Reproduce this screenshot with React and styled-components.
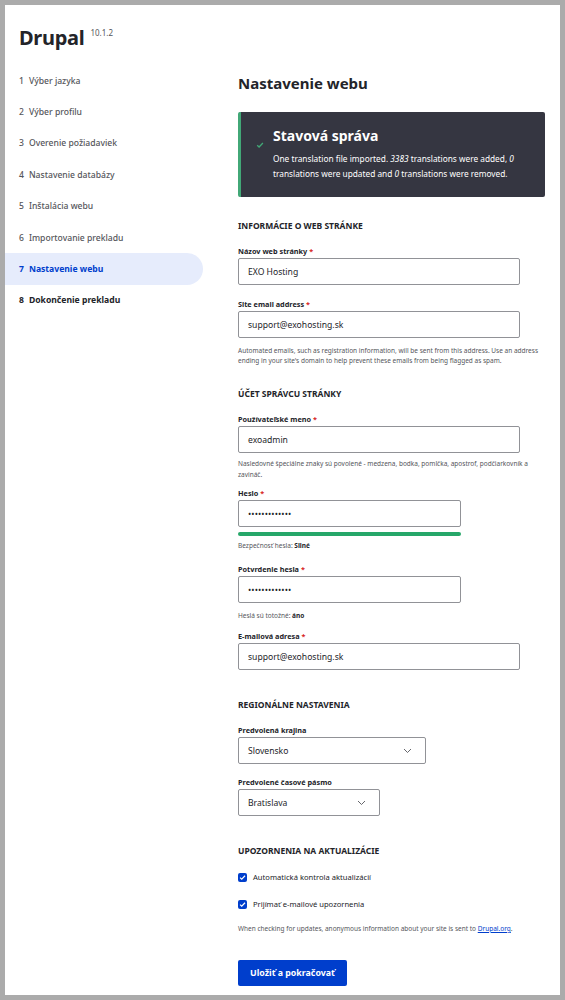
import React from 'react';
import styled, { createGlobalStyle } from 'styled-components';

const Global = createGlobalStyle`
  html, body { margin: 0; padding: 0; background: #ababab; }
  * { box-sizing: border-box; }
  body { font-family: "Noto Sans", "Open Sans", sans-serif; color: #232429; }
`

const Frame = styled.div`
  width: 565px;
  height: 1000px;
  border: 5px solid #ababab;
  background: #fff;
  overflow: hidden;
`

const Header = styled.header`
  height: 60px;
  padding: 20px 0 0 14px;
  display: flex;
  align-items: flex-start;
  gap: 6px;
`

const Brand = styled.h1`
  margin: 0;
  font-size: 20px;
  line-height: 26px;
  font-weight: 700;
  letter-spacing: -0.3px;
`

const Version = styled.span`
  font-size: 8px;
  line-height: 12px;
  color: #55565b;
  margin-top: 2px;
`

const Layout = styled.div`
  display: grid;
  grid-template-columns: 198px 307px;
  column-gap: 35px;
`

const Steps = styled.ol`
  list-style: none;
  margin: 0;
  padding: 0;
`

const Step = styled.li`
  height: 31.4px;
  display: flex;
  align-items: center;
  gap: 5px;
  padding-left: 14px;
  font-size: 8.6px;
  color: ${({ $active, $done }) => ($active ? '#003ecc' : $done ? '#55565b' : '#232429')};
  font-weight: ${({ $done }) => ($done ? 500 : 700)};
  background: ${({ $active }) => ($active ? '#e6ecfc' : 'transparent')};
  border-radius: 0 16px 16px 0;
`

const Main = styled.main`
  padding-top: 8px;
`

const PageTitle = styled.h2`
  margin: 0 0 19px;
  font-size: 15px;
  line-height: 20px;
  font-weight: 700;
`

const Message = styled.div`
  height: 85px;
  background: #353641;
  border-left: 3px solid #42a877;
  border-radius: 2px;
  padding: 14px 6px 0 15px;
  display: grid;
  grid-template-columns: 17px 1fr;
  color: #fff;
`

const MessageTitle = styled.div`
  font-size: 14px;
  line-height: 20px;
  font-weight: 700;
  margin-bottom: 5px;
`

const MessageText = styled.div`
  font-size: 8.3px;
  line-height: 15px;
  em { font-style: italic; }
`

const SectionTitle = styled.h3`
  margin: ${({ $top }) => $top}px 0 0;
  font-size: 8.5px;
  line-height: 14px;
  font-weight: 700;
  text-transform: uppercase;
`

const Field = styled.div`
  margin-top: ${({ $top }) => $top}px;
`

const Label = styled.label`
  display: block;
  font-size: 7.3px;
  line-height: 12px;
  font-weight: 700;
  margin-bottom: 1px;
`

const Req = styled.span`
  color: #d72222;
  margin-left: 2px;
`

const Input = styled.div`
  width: ${({ $w }) => $w}px;
  height: 27px;
  border: 1px solid #919297;
  border-radius: 2px;
  padding: 0 9px;
  display: flex;
  align-items: center;
  font-size: 8.6px;
  color: #232429;
  letter-spacing: ${({ $dots }) => ($dots ? '0.1px' : '0')};
`

const SelectBox = styled(Input)`
  justify-content: space-between;
  padding-right: 13px;
`

const Help = styled.div`
  margin-top: ${({ $top }) => $top}px;
  font-size: 6.5px;
  line-height: ${({ $lh }) => $lh || 10}px;
  color: #55565b;
  b { color: #232429; font-weight: 700; }
  a { color: #003ecc; }
`

const Strength = styled.div`
  width: 223px;
  height: 4px;
  margin-top: 5px;
  border-radius: 2px;
  background: #26a769;
`

const CheckRow = styled.div`
  margin-top: ${({ $top }) => $top}px;
  height: 14px;
  display: flex;
  align-items: center;
  gap: 6px;
  font-size: 7.6px;
  color: #232429;
`

const Box = styled.span`
  width: 9px;
  height: 9px;
  border-radius: 2px;
  background: #003ecc;
  display: flex;
  align-items: center;
  justify-content: center;
`

const Button = styled.button`
  margin-top: 26px;
  height: 26px;
  padding: 0 12px;
  border: 0;
  border-radius: 2px;
  background: #003ecc;
  color: #fff;
  font-family: inherit;
  font-size: 8.8px;
  font-weight: 700;
`

const Chevron = () => (
  <svg width="9" height="6" viewBox="0 0 9 6" fill="none">
    <path d="M1 1l3.5 3.5L8 1" stroke="#55565b" strokeWidth="0.9" />
  </svg>
)

const Tick = ({ size = 7, color = '#fff' }) => (
  <svg width={size} height={size} viewBox="0 0 8 8" fill="none">
    <path d="M1.2 4.2l1.9 1.8L6.9 2" stroke={color} strokeWidth="1.3" />
  </svg>
)

const steps = [
  'Výber jazyka',
  'Výber profilu',
  'Overenie požiadaviek',
  'Nastavenie databázy',
  'Inštalácia webu',
  'Importovanie prekladu',
  'Nastavenie webu',
  'Dokončenie prekladu',
]

export default function App() {
  return (
    <>
      <Global />
      <Frame>
        <Header>
          <Brand>Drupal</Brand>
          <Version>10.1.2</Version>
        </Header>
        <Layout>
          <Steps>
            {steps.map((s, i) => (
              <Step key={s} $done={i < 6} $active={i === 6}>
                <span>{i + 1}</span>
                <span>{s}</span>
              </Step>
            ))}
          </Steps>
          <Main>
            <PageTitle>Nastavenie webu</PageTitle>
            <Message>
              <div style={{ paddingTop: 6 }}><Tick size={8} color="#42a877" /></div>
              <div>
                <MessageTitle>Stavová správa</MessageTitle>
                <MessageText>
                  One translation file imported. <em>3383</em> translations were added, <em>0</em>{' '}
                  translations were updated and <em>0</em> translations were removed.
                </MessageText>
              </div>
            </Message>

            <SectionTitle $top={22}>Informácie o web stránke</SectionTitle>
            <Field $top={12}>
              <Label>Názov web stránky<Req>*</Req></Label>
              <Input $w={282}>EXO Hosting</Input>
            </Field>
            <Field $top={13}>
              <Label>Site email address<Req>*</Req></Label>
              <Input $w={282}>support@exohosting.sk</Input>
              <Help $top={8}>
                Automated emails, such as registration information, will be sent from this address. Use an address
                ending in your site's domain to help prevent these emails from being flagged as spam.
              </Help>
            </Field>

            <SectionTitle $top={21}>Účet správcu stránky</SectionTitle>
            <Field $top={12}>
              <Label>Používateľské meno<Req>*</Req></Label>
              <Input $w={282}>exoadmin</Input>
              <Help $top={5} $lh={11}>
                Nasledovné špeciálne znaky sú povolené - medzena, bodka, pomlčka, apostrof, podčiarkovník a zavináč.
              </Help>
            </Field>
            <Field $top={7}>
              <Label>Heslo<Req>*</Req></Label>
              <Input $w={223} $dots>•••••••••••••</Input>
              <Strength />
              <Help $top={5}>Bezpečnosť hesla: <b>Silné</b></Help>
            </Field>
            <Field $top={12}>
              <Label>Potvrdenie hesla<Req>*</Req></Label>
              <Input $w={223} $dots>•••••••••••••</Input>
              <Help $top={8}>Heslá sú totožné: <b>áno</b></Help>
            </Field>
            <Field $top={9}>
              <Label>E-mailová adresa<Req>*</Req></Label>
              <Input $w={282}>support@exohosting.sk</Input>
            </Field>

            <SectionTitle $top={28}>Regionálne nastavenia</SectionTitle>
            <Field $top={12}>
              <Label>Predvolená krajina</Label>
              <SelectBox $w={188}>Slovensko<Chevron /></SelectBox>
            </Field>
            <Field $top={12}>
              <Label>Predvolené časové pásmo</Label>
              <SelectBox $w={142}>Bratislava<Chevron /></SelectBox>
            </Field>

            <SectionTitle $top={28}>Upozornenia na aktualizácie</SectionTitle>
            <CheckRow $top={12}><Box><Tick /></Box>Automatická kontrola aktualizácií</CheckRow>
            <CheckRow $top={13}><Box><Tick /></Box>Prijímať e-mailové upozornenia</CheckRow>
            <Help $top={13}>
              When checking for updates, anonymous information about your site is sent to <a href="#">Drupal.org</a>.
            </Help>
            <Button>Uložiť a pokračovať</Button>
          </Main>
        </Layout>
      </Frame>
    </>
  )
}
